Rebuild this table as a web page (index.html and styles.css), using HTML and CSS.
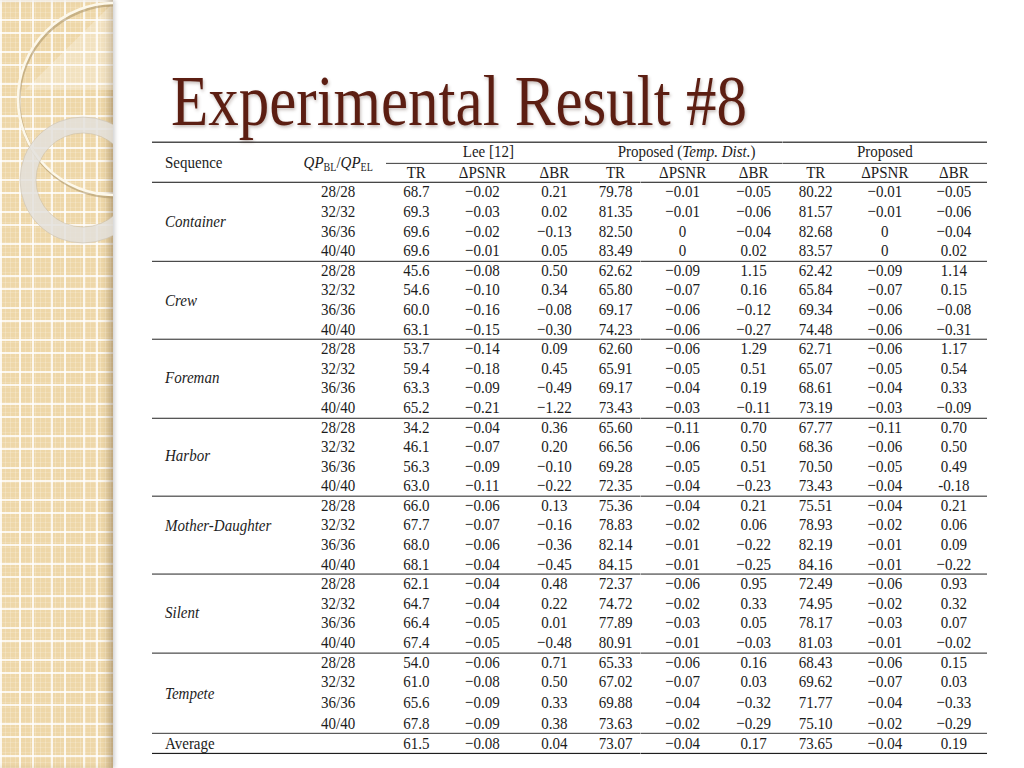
FILE: index.html
```html
<!DOCTYPE html>
<html lang="en">
<head>
<meta charset="utf-8">
<title>Experimental Result #8</title>
<link rel="stylesheet" href="styles.css">
</head>
<body>
<div class="slide">
  <aside class="panel">
    <svg class="deco" width="113" height="768" viewBox="0 0 113 768" aria-hidden="true">
      <polygon points="25,90 113,90 113,3" fill="#ffffff" fill-opacity="0.28"/>
      <circle cx="115" cy="101" r="96" fill="none" stroke="#a88f62" stroke-opacity="0.55" stroke-width="3"/>
      <circle cx="114" cy="99" r="96" fill="none" stroke="#fdf8ea" stroke-width="2.6"/>
      <circle cx="83" cy="180" r="55" fill="none" stroke="#e3e1dc" stroke-opacity="0.85" stroke-width="16"/>
      <circle cx="83" cy="180" r="63" fill="none" stroke="#c9bfac" stroke-opacity="0.7" stroke-width="0.8"/>
      <circle cx="83" cy="180" r="47" fill="none" stroke="#c9bfac" stroke-opacity="0.7" stroke-width="0.8"/>
    </svg>
  </aside>
  <main class="content">
    <h1 class="title">Experimental Result #8</h1>
    <table class="tbl">
      <colgroup>
        <col class="c-seq"><col class="c-qp">
        <col class="c-1"><col class="c-2"><col class="c-3">
        <col class="c-4"><col class="c-5"><col class="c-6">
        <col class="c-7"><col class="c-8"><col class="c-9">
      </colgroup>
      <thead>
        <tr class="h1">
          <th rowspan="2" class="seq span2">Sequence</th>
          <th rowspan="2" class="span2"><i>QP</i><sub>BL</sub>/<i>QP</i><sub>EL</sub></th>
          <th colspan="3" class="cgrp">Lee [12]</th>
          <th colspan="3" class="cgrp">Proposed (<i>Temp. Dist.</i>)</th>
          <th colspan="3" class="cgrp">Proposed</th>
        </tr>
        <tr class="h2">
          <th>TR</th><th>ΔPSNR</th><th>ΔBR</th>
          <th>TR</th><th>ΔPSNR</th><th>ΔBR</th>
          <th>TR</th><th>ΔPSNR</th><th>ΔBR</th>
        </tr>
      </thead>
      <tbody class="grp">
        <tr><td rowspan="4" class="seq name">Container</td><td>28/28</td><td>68.7</td><td>−0.02</td><td>0.21</td><td>79.78</td><td>−0.01</td><td>−0.05</td><td>80.22</td><td>−0.01</td><td>−0.05</td></tr>
        <tr><td>32/32</td><td>69.3</td><td>−0.03</td><td>0.02</td><td>81.35</td><td>−0.01</td><td>−0.06</td><td>81.57</td><td>−0.01</td><td>−0.06</td></tr>
        <tr><td>36/36</td><td>69.6</td><td>−0.02</td><td>−0.13</td><td>82.50</td><td>0</td><td>−0.04</td><td>82.68</td><td>0</td><td>−0.04</td></tr>
        <tr><td>40/40</td><td>69.6</td><td>−0.01</td><td>0.05</td><td>83.49</td><td>0</td><td>0.02</td><td>83.57</td><td>0</td><td>0.02</td></tr>
      </tbody>
      <tbody class="grp">
        <tr><td rowspan="4" class="seq name">Crew</td><td>28/28</td><td>45.6</td><td>−0.08</td><td>0.50</td><td>62.62</td><td>−0.09</td><td>1.15</td><td>62.42</td><td>−0.09</td><td>1.14</td></tr>
        <tr><td>32/32</td><td>54.6</td><td>−0.10</td><td>0.34</td><td>65.80</td><td>−0.07</td><td>0.16</td><td>65.84</td><td>−0.07</td><td>0.15</td></tr>
        <tr><td>36/36</td><td>60.0</td><td>−0.16</td><td>−0.08</td><td>69.17</td><td>−0.06</td><td>−0.12</td><td>69.34</td><td>−0.06</td><td>−0.08</td></tr>
        <tr><td>40/40</td><td>63.1</td><td>−0.15</td><td>−0.30</td><td>74.23</td><td>−0.06</td><td>−0.27</td><td>74.48</td><td>−0.06</td><td>−0.31</td></tr>
      </tbody>
      <tbody class="grp">
        <tr><td rowspan="4" class="seq name">Foreman</td><td>28/28</td><td>53.7</td><td>−0.14</td><td>0.09</td><td>62.60</td><td>−0.06</td><td>1.29</td><td>62.71</td><td>−0.06</td><td>1.17</td></tr>
        <tr><td>32/32</td><td>59.4</td><td>−0.18</td><td>0.45</td><td>65.91</td><td>−0.05</td><td>0.51</td><td>65.07</td><td>−0.05</td><td>0.54</td></tr>
        <tr><td>36/36</td><td>63.3</td><td>−0.09</td><td>−0.49</td><td>69.17</td><td>−0.04</td><td>0.19</td><td>68.61</td><td>−0.04</td><td>0.33</td></tr>
        <tr><td>40/40</td><td>65.2</td><td>−0.21</td><td>−1.22</td><td>73.43</td><td>−0.03</td><td>−0.11</td><td>73.19</td><td>−0.03</td><td>−0.09</td></tr>
      </tbody>
      <tbody class="grp">
        <tr><td rowspan="4" class="seq name">Harbor</td><td>28/28</td><td>34.2</td><td>−0.04</td><td>0.36</td><td>65.60</td><td>−0.11</td><td>0.70</td><td>67.77</td><td>−0.11</td><td>0.70</td></tr>
        <tr><td>32/32</td><td>46.1</td><td>−0.07</td><td>0.20</td><td>66.56</td><td>−0.06</td><td>0.50</td><td>68.36</td><td>−0.06</td><td>0.50</td></tr>
        <tr><td>36/36</td><td>56.3</td><td>−0.09</td><td>−0.10</td><td>69.28</td><td>−0.05</td><td>0.51</td><td>70.50</td><td>−0.05</td><td>0.49</td></tr>
        <tr><td>40/40</td><td>63.0</td><td>−0.11</td><td>−0.22</td><td>72.35</td><td>−0.04</td><td>−0.23</td><td>73.43</td><td>−0.04</td><td>-0.18</td></tr>
      </tbody>
      <tbody class="grp">
        <tr><td rowspan="4" class="seq name name-up">Mother-Daughter</td><td>28/28</td><td>66.0</td><td>−0.06</td><td>0.13</td><td>75.36</td><td>−0.04</td><td>0.21</td><td>75.51</td><td>−0.04</td><td>0.21</td></tr>
        <tr><td>32/32</td><td>67.7</td><td>−0.07</td><td>−0.16</td><td>78.83</td><td>−0.02</td><td>0.06</td><td>78.93</td><td>−0.02</td><td>0.06</td></tr>
        <tr><td>36/36</td><td>68.0</td><td>−0.06</td><td>−0.36</td><td>82.14</td><td>−0.01</td><td>−0.22</td><td>82.19</td><td>−0.01</td><td>0.09</td></tr>
        <tr><td>40/40</td><td>68.1</td><td>−0.04</td><td>−0.45</td><td>84.15</td><td>−0.01</td><td>−0.25</td><td>84.16</td><td>−0.01</td><td>−0.22</td></tr>
      </tbody>
      <tbody class="grp">
        <tr><td rowspan="4" class="seq name">Silent</td><td>28/28</td><td>62.1</td><td>−0.04</td><td>0.48</td><td>72.37</td><td>−0.06</td><td>0.95</td><td>72.49</td><td>−0.06</td><td>0.93</td></tr>
        <tr><td>32/32</td><td>64.7</td><td>−0.04</td><td>0.22</td><td>74.72</td><td>−0.02</td><td>0.33</td><td>74.95</td><td>−0.02</td><td>0.32</td></tr>
        <tr><td>36/36</td><td>66.4</td><td>−0.05</td><td>0.01</td><td>77.89</td><td>−0.03</td><td>0.05</td><td>78.17</td><td>−0.03</td><td>0.07</td></tr>
        <tr><td>40/40</td><td>67.4</td><td>−0.05</td><td>−0.48</td><td>80.91</td><td>−0.01</td><td>−0.03</td><td>81.03</td><td>−0.01</td><td>−0.02</td></tr>
      </tbody>
      <tbody class="grp">
        <tr><td rowspan="4" class="seq name">Tempete</td><td>28/28</td><td>54.0</td><td>−0.06</td><td>0.71</td><td>65.33</td><td>−0.06</td><td>0.16</td><td>68.43</td><td>−0.06</td><td>0.15</td></tr>
        <tr><td>32/32</td><td>61.0</td><td>−0.08</td><td>0.50</td><td>67.02</td><td>−0.07</td><td>0.03</td><td>69.62</td><td>−0.07</td><td>0.03</td></tr>
        <tr class="tall"><td>36/36</td><td>65.6</td><td>−0.09</td><td>0.33</td><td>69.88</td><td>−0.04</td><td>−0.32</td><td>71.77</td><td>−0.04</td><td>−0.33</td></tr>
        <tr><td>40/40</td><td>67.8</td><td>−0.09</td><td>0.38</td><td>73.63</td><td>−0.02</td><td>−0.29</td><td>75.10</td><td>−0.02</td><td>−0.29</td></tr>
      </tbody>
      <tbody class="avg">
        <tr><td class="seq">Average</td><td></td><td>61.5</td><td>−0.08</td><td>0.04</td><td>73.07</td><td>−0.04</td><td>0.17</td><td>73.65</td><td>−0.04</td><td>0.19</td></tr>
      </tbody>
    </table>
  </main>
</div>
</body>
</html>
```

FILE: styles.css
```css
html, body {
  margin: 0;
  padding: 0;
  background: #ffffff;
}

.slide {
  display: flex;
  width: 1024px;
  height: 768px;
  overflow: hidden;
  background: #ffffff;
}

/* left decorative strip */
.panel {
  flex: none;
  width: 113px;
  height: 768px;
  background-color: #eed7a8;
  background-image:
    linear-gradient(90deg, rgba(255,255,255,0.8) 2px, transparent 2px),
    linear-gradient(90deg, rgba(255,255,255,0.8) 2px, transparent 2px),
    linear-gradient(rgba(255,255,255,0.8) 2px, transparent 2px),
    linear-gradient(rgba(255,255,255,0.8) 2px, transparent 2px),
    repeating-linear-gradient(90deg, rgba(255,255,255,0.2) 0 1px, transparent 1px 5px),
    repeating-linear-gradient(0deg, rgba(255,255,255,0.16) 0 1px, transparent 1px 5px);
  background-size: 32px 32px, 32px 32px, 32px 32px, 32px 32px, auto, auto;
  background-position: 0 0, 19px 0, 0 0, 0 19px, 0 0, 0 0;
  box-shadow: inset -7px 0 7px -3px rgba(120, 96, 60, 0.45), 2px 0 4px rgba(0, 0, 0, 0.18);
  position: relative;
  z-index: 1;
}

.deco {
  display: block;
}

/* main area, drawn with the slide's vertical stretch */
.content {
  flex: 1;
  transform: scaleY(1.18);
  transform-origin: 0 0;
}

.title {
  margin: 55px 0 0 58px;
  font-family: "Liberation Serif", "Times New Roman", serif;
  font-weight: normal;
  font-size: 61px;
  line-height: 61px;
  color: #5c1e12;
  text-shadow: 1px 2px 3px rgba(60, 30, 20, 0.3);
  white-space: nowrap;
}

.tbl {
  margin: 3.5px 0 0 39px;
  width: 835px;
  table-layout: fixed;
  border-collapse: collapse;
  border-spacing: 0;
  font-family: "Liberation Serif", "Times New Roman", serif;
  font-size: 15px;
  color: #1c1c1c;
}

.c-seq { width: 138px; }
.c-qp { width: 96px; }
.c-1 { width: 60px; }
.c-2 { width: 72px; }
.c-3 { width: 72px; }
.c-4 { width: 50px; }
.c-5 { width: 84px; }
.c-6 { width: 58px; }
.c-7 { width: 66px; }
.c-8 { width: 72px; }
.c-9 { width: 66px; }

.tbl th,
.tbl td {
  padding: 0;
  font-weight: normal;
  text-align: center;
  vertical-align: middle;
  line-height: 15px;
  white-space: nowrap;
}

.tbl .seq {
  text-align: left;
  padding-left: 13px;
}

.tbl .name {
  font-style: italic;
}

.tbl .name-up {
  padding-bottom: 15px;
}

.tbl sub {
  font-size: 10px;
  line-height: 0;
  vertical-align: -3px;
}

.tbl .h1 > th {
  height: 18px;
  padding-bottom: 1px;
  background: linear-gradient(#1e1e1e, #1e1e1e) top / 100% 1.3px no-repeat;
}

.tbl .h1 > th.span2 {
  padding-bottom: 0;
  background:
    linear-gradient(#1e1e1e, #1e1e1e) top / 100% 1.3px no-repeat,
    linear-gradient(#333333, #333333) bottom / 100% 1px no-repeat;
}

.tbl .h1 > th.cgrp {
  background:
    linear-gradient(#1e1e1e, #1e1e1e) top / 100% 1.3px no-repeat,
    linear-gradient(#555555, #555555) bottom / 100% 1px no-repeat;
}

.tbl .h2 > th {
  height: 16.1px;
  background: linear-gradient(#333333, #333333) bottom / 100% 1px no-repeat;
}

.tbl tbody td {
  height: 16.6px;
}

.tbl tbody td.name {
  height: auto;
}

.tbl tbody tr.tall > td {
  height: 18.8px;
}

.tbl tbody.grp + tbody.grp > tr:first-child > td {
  background: linear-gradient(#444444, #444444) top / 100% 1px no-repeat;
}

.tbl tbody.avg td {
  height: 18px;
  background:
    linear-gradient(#555555, #555555) top / 100% 1px no-repeat,
    linear-gradient(#1e1e1e, #1e1e1e) bottom / 100% 1.3px no-repeat;
}
```
